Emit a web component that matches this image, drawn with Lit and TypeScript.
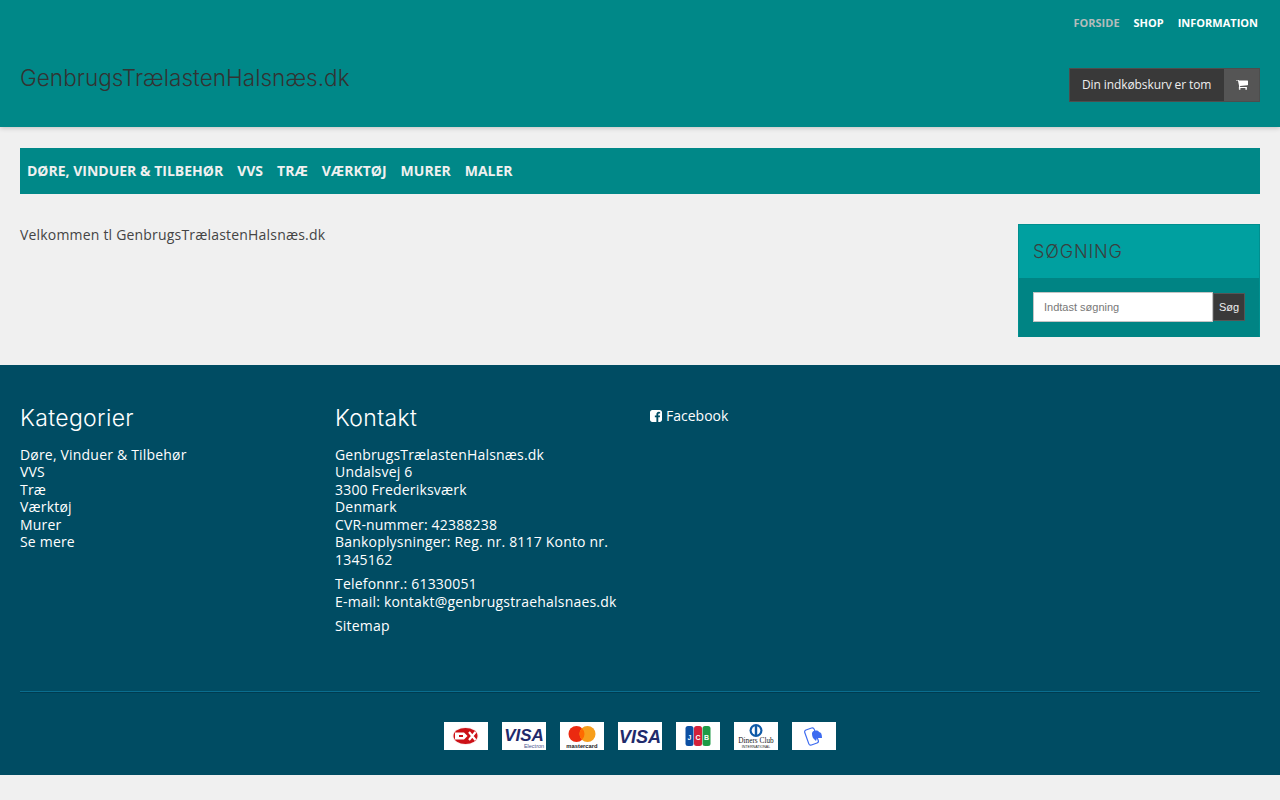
import { LitElement, html, css } from "lit";
import { customElement } from "lit/decorators.js";

const cats = ["Døre, Vinduer & Tilbehør", "VVS", "Træ", "Værktøj", "Murer", "Se mere"];
const menu = ["Døre, Vinduer & Tilbehør", "VVS", "Træ", "Værktøj", "Murer", "Maler"];

@customElement("app-root")
export class AppRoot extends LitElement {
  static styles = css`
    :host { display: block; min-height: 800px; background: #f0f0f0; color: #444; font: 14px/17.5px "Open Sans", sans-serif; }
    * { box-sizing: border-box; }
    a { color: inherit; text-decoration: none; }
    header { height: 127px; background: #008888; box-shadow: 0 1px 5px rgba(0,0,0,.2); padding: 0 20px; display: flex; flex-direction: column; }
    .top { display: flex; justify-content: flex-end; gap: 14px; padding: 15px 2px 0 0; font-size: 11px; line-height: 16px; font-weight: 700; text-transform: uppercase; color: #fff; }
    .top .on { color: #b5bcbc; }
    .brand { display: flex; justify-content: space-between; align-items: flex-start; padding-top: 32px; }
    .logo { font: 300 22.5px/29px Inter, sans-serif; color: #333; letter-spacing: .05px; }
    .cart { display: flex; height: 34px; margin-top: 5px; border: 1px solid #4d4d4d; color: #eee; font: 12px/32px "Open Sans", sans-serif; letter-spacing: -.1px; }
    .cart span { width: 154px; padding-left: 12px; background: #393939; }
    .cart i { width: 35px; background: #555; display: flex; align-items: center; justify-content: center; }
    nav { margin: 21px 20px 0; height: 46px; background: #008888; display: flex; align-items: center; gap: 14px; padding-left: 7px; font-weight: 700; text-transform: uppercase; color: #f0f0f0; }
    main { display: flex; justify-content: space-between; align-items: flex-start; padding: 30px 20px 28px; }
    main p { margin: 2px 0 0; letter-spacing: .19px; }
    aside { width: 242px; height: 113px; background: #008484; border: 1px solid #008f8f; border-bottom: 0; }
    aside h3 { margin: 0; height: 53px; background: #00a0a0; padding-left: 14px; font: 300 18px/53px Inter, sans-serif; color: #3a3f3f; letter-spacing: .85px; text-transform: uppercase; }
    form { display: flex; padding: 14px 14px 0; align-items: center; }
    input { width: 181px; height: 30px; border: 1px solid #c4c4c4; padding: 0 10px; font: 11px "Liberation Sans", sans-serif; background: #fff; }
    input::placeholder { color: #777; }
    button { width: 32px; height: 28px; border: 1px solid #555; background: #393939; color: #eee; font: 11px "Liberation Sans", sans-serif; padding: 0; }
    footer { height: 410px; background: #004c63; color: #fff; padding: 0 20px; }
    .cols { display: grid; grid-template-columns: repeat(4, 295px); column-gap: 20px; height: 328px; border-bottom: 1px solid #003c50; box-shadow: inset 0 -1px 0 #0a6d8e; padding-top: 39px; letter-spacing: .19px; }
    h4 { margin: 0 0 13.750px; font: 300 23px/28px Inter, sans-serif; letter-spacing: .35px; }
    .cols p { margin: 0 0 6.750px; }
    ul { list-style: none; margin: 0; padding: 0; }
    .fb { display: flex; align-items: center; gap: 4px; margin-top: 3px; letter-spacing: 0; }
    .cards { display: flex; justify-content: center; gap: 14px; margin-top: 29px; }
    .c { width: 44px; height: 28px; background: #fff; display: block; font-family: "Liberation Sans", sans-serif; }
  `;

  private cards() {
    return html`<div class="cards">
      <svg class="c" viewBox="0 0 44 28"><ellipse cx="21.500" cy="14" rx="13" ry="9" fill="#fbeaea"/><ellipse cx="21.500" cy="14" rx="12" ry="8" fill="#cc1016"/><path d="M11 10.500h9l3.500 3.500-3.500 3.500h-9z" fill="#fff"/><rect x="15" y="13" width="4" height="2" fill="#cc1016"/><path d="M25 10l6.500 8M31.500 10l-6.500 8" fill="none" stroke="#fff" stroke-width="2.200"/></svg>
      <svg class="c" viewBox="0 0 44 28"><text x="22" y="18.500" text-anchor="middle" font-size="17" font-weight="700" font-style="italic" fill="#1f2a6b">VISA</text><text x="32" y="25.500" text-anchor="middle" font-size="5.500" fill="#4a5590">Electron</text></svg>
      <svg class="c" viewBox="0 0 44 28"><circle cx="16.500" cy="12" r="8" fill="#eb2a10"/><circle cx="27.500" cy="12" r="8" fill="#f79e1b"/><path d="M22 6.200a8 8 0 0 1 0 11.600a8 8 0 0 1 0-11.600z" fill="#ff6a00"/><text x="22" y="25.500" text-anchor="middle" font-size="5.800" font-weight="700" fill="#222">mastercard</text></svg>
      <svg class="c" viewBox="0 0 44 28"><text x="22" y="20.500" text-anchor="middle" font-size="18" font-weight="700" font-style="italic" fill="#1f2a6b">VISA</text></svg>
      <svg class="c" viewBox="0 0 44 28"><rect x="9.500" y="4" width="8" height="20" rx="2.500" fill="#0b4ea2"/><rect x="18" y="4" width="8" height="20" rx="2.500" fill="#d3213a"/><rect x="26.500" y="4" width="8" height="20" rx="2.500" fill="#1e9a46"/><text x="13.500" y="17.500" text-anchor="middle" font-size="7" font-weight="700" fill="#fff">J</text><text x="22" y="17.500" text-anchor="middle" font-size="7" font-weight="700" fill="#fff">C</text><text x="30.500" y="17.500" text-anchor="middle" font-size="7" font-weight="700" fill="#fff">B</text></svg>
      <svg class="c" viewBox="0 0 44 28"><circle cx="22" cy="8.500" r="6.500" fill="#0e5aa7"/><circle cx="22" cy="8.500" r="4.300" fill="#fff"/><rect x="20.800" y="4" width="2.400" height="9" fill="#0e5aa7"/><text x="22" y="21" text-anchor="middle" font-size="7.300" font-family="Liberation Serif" fill="#222">Diners Club</text><text x="22" y="25.500" text-anchor="middle" font-size="3.600" fill="#222">INTERNATIONAL</text></svg>
      <svg class="c" viewBox="0 0 44 28"><rect x="14.500" y="6.500" width="10" height="16" rx="2" transform="rotate(-20 19.500 14.500)" fill="#fff" stroke="#3d6bf0" stroke-width="1.200"/><path d="M20 11c1-3 6-3 7-1 2 0 3 2 3 6h-5l-1 3-3-3c-1-2-1-4-1-5z" fill="#3d6bf0"/></svg>
    </div>`;
  }

  render() {
    return html`
      <header>
        <div class="top"><a class="on" href="#">Forside</a><a href="#">Shop</a><a href="#">Information</a></div>
        <div class="brand">
          <a class="logo" href="#">GenbrugsTrælastenHalsnæs.dk</a>
          <div class="cart"><span>Din indkøbskurv er tom</span><i>
            <svg width="12" height="10" viewBox="64 320 1664 1344" fill="#fff"><path d="M704 1536q0 52-38 90t-90 38-90-38-38-90 38-90 90-38 90 38 38 90zm896 0q0 52-38 90t-90 38-90-38-38-90 38-90 90-38 90 38 38 90zm128-1088v512q0 24-16.500 42.500t-40.500 21.500l-1044 122q13 60 13 70 0 16-24 64h920q26 0 45 19t19 45-19 45-45 19h-1024q-26 0-45-19t-19-45q0-11 8-31.500t16-36 21.500-40 15.500-29.500l-177-823h-204q-26 0-45-19t-19-45 19-45 45-19h256q16 0 28.500 6.500t19.500 15.500 13 24.500 8 26 5.500 29.500 4.500 26h1201q26 0 45 19t19 45z"/></svg>
          </i></div>
        </div>
      </header>
      <nav>${menu.map((m) => html`<a href="#">${m}</a>`)}</nav>
      <main>
        <p>Velkommen tl GenbrugsTrælastenHalsnæs.dk</p>
        <aside>
          <h3>Søgning</h3>
          <form><input placeholder="Indtast søgning" /><button type="button">Søg</button></form>
        </aside>
      </main>
      <footer>
        <div class="cols">
          <div><h4>Kategorier</h4><ul>${cats.map((c) => html`<li><a href="#">${c}</a></li>`)}</ul></div>
          <div>
            <h4>Kontakt</h4>
            <p>GenbrugsTrælastenHalsnæs.dk<br />Undalsvej 6<br />3300 Frederiksværk<br />Denmark<br />CVR-nummer: 42388238<br />Bankoplysninger: Reg. nr. 8117 Konto nr. 1345162</p>
            <p>Telefonnr.: 61330051<br />E-mail: kontakt@genbrugstraehalsnaes.dk</p>
            <p>Sitemap</p>
          </div>
          <div><a class="fb" href="#"><svg width="12" height="12" viewBox="128 128 1536 1536"><path fill="#fff" d="M1376 128q119 0 203.500 84.500t84.500 203.500v960q0 119-84.500 203.500t-203.500 84.500h-188v-595h199l30-232h-229v-148q0-56 23.500-84t91.500-28l122-1v-207q-63-9-178-9-136 0-217.500 80t-81.500 226v171h-200v232h200v595h-532q-119 0-203.500-84.500t-84.500-203.500v-960q0-119 84.500-203.500t203.500-84.500h960z"/></svg>Facebook</a></div>
        </div>
        ${this.cards()}
      </footer>
    `;
  }
}
